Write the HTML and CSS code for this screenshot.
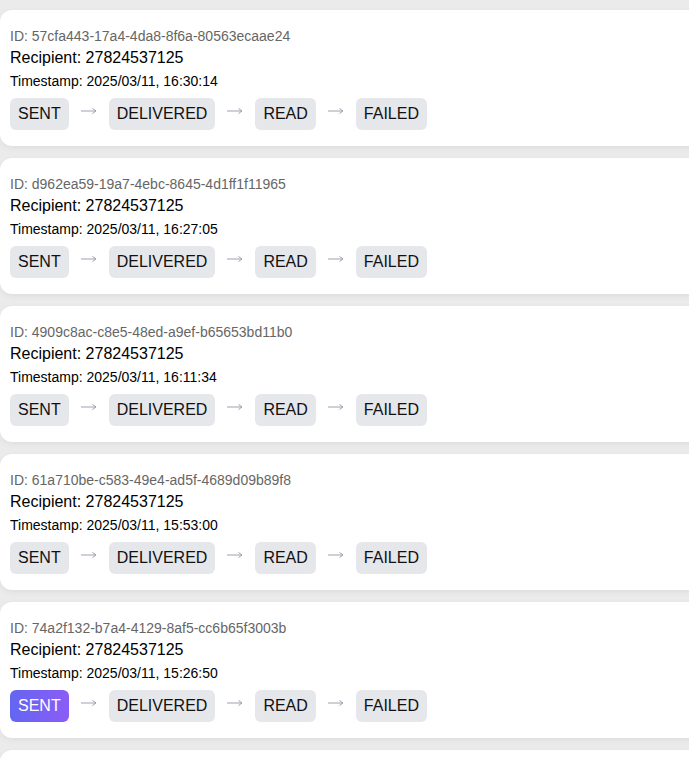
FILE: index.html
```html
<!DOCTYPE html>
<html lang="en">
<head>
<meta charset="utf-8">
<title>Messages</title>
<link rel="stylesheet" href="styles.css">
</head>
<body>
<div class="list">
  <div class="card">
    <div class="msg-id">ID: 57cfa443-17a4-4da8-8f6a-80563ecaae24</div>
    <div class="recipient">Recipient: 27824537125</div>
    <div class="stamp">Timestamp: 2025/03/11, 16:30:14</div>
    <div class="flow">
      <span class="badge">SENT</span><svg class="arrow" viewBox="0 0 16 8"><path d="M0 4H15M11.5 1.5L15 4L11.5 6.5"/></svg>
      <span class="badge">DELIVERED</span><svg class="arrow" viewBox="0 0 16 8"><path d="M0 4H15M11.5 1.5L15 4L11.5 6.5"/></svg>
      <span class="badge">READ</span><svg class="arrow" viewBox="0 0 16 8"><path d="M0 4H15M11.5 1.5L15 4L11.5 6.5"/></svg>
      <span class="badge">FAILED</span>
    </div>
  </div>
  <div class="card">
    <div class="msg-id">ID: d962ea59-19a7-4ebc-8645-4d1ff1f11965</div>
    <div class="recipient">Recipient: 27824537125</div>
    <div class="stamp">Timestamp: 2025/03/11, 16:27:05</div>
    <div class="flow">
      <span class="badge">SENT</span><svg class="arrow" viewBox="0 0 16 8"><path d="M0 4H15M11.5 1.5L15 4L11.5 6.5"/></svg>
      <span class="badge">DELIVERED</span><svg class="arrow" viewBox="0 0 16 8"><path d="M0 4H15M11.5 1.5L15 4L11.5 6.5"/></svg>
      <span class="badge">READ</span><svg class="arrow" viewBox="0 0 16 8"><path d="M0 4H15M11.5 1.5L15 4L11.5 6.5"/></svg>
      <span class="badge">FAILED</span>
    </div>
  </div>
  <div class="card">
    <div class="msg-id">ID: 4909c8ac-c8e5-48ed-a9ef-b65653bd11b0</div>
    <div class="recipient">Recipient: 27824537125</div>
    <div class="stamp">Timestamp: 2025/03/11, 16:11:34</div>
    <div class="flow">
      <span class="badge">SENT</span><svg class="arrow" viewBox="0 0 16 8"><path d="M0 4H15M11.5 1.5L15 4L11.5 6.5"/></svg>
      <span class="badge">DELIVERED</span><svg class="arrow" viewBox="0 0 16 8"><path d="M0 4H15M11.5 1.5L15 4L11.5 6.5"/></svg>
      <span class="badge">READ</span><svg class="arrow" viewBox="0 0 16 8"><path d="M0 4H15M11.5 1.5L15 4L11.5 6.5"/></svg>
      <span class="badge">FAILED</span>
    </div>
  </div>
  <div class="card">
    <div class="msg-id">ID: 61a710be-c583-49e4-ad5f-4689d09b89f8</div>
    <div class="recipient">Recipient: 27824537125</div>
    <div class="stamp">Timestamp: 2025/03/11, 15:53:00</div>
    <div class="flow">
      <span class="badge">SENT</span><svg class="arrow" viewBox="0 0 16 8"><path d="M0 4H15M11.5 1.5L15 4L11.5 6.5"/></svg>
      <span class="badge">DELIVERED</span><svg class="arrow" viewBox="0 0 16 8"><path d="M0 4H15M11.5 1.5L15 4L11.5 6.5"/></svg>
      <span class="badge">READ</span><svg class="arrow" viewBox="0 0 16 8"><path d="M0 4H15M11.5 1.5L15 4L11.5 6.5"/></svg>
      <span class="badge">FAILED</span>
    </div>
  </div>
  <div class="card">
    <div class="msg-id">ID: 74a2f132-b7a4-4129-8af5-cc6b65f3003b</div>
    <div class="recipient">Recipient: 27824537125</div>
    <div class="stamp">Timestamp: 2025/03/11, 15:26:50</div>
    <div class="flow">
      <span class="badge active">SENT</span><svg class="arrow" viewBox="0 0 16 8"><path d="M0 4H15M11.5 1.5L15 4L11.5 6.5"/></svg>
      <span class="badge">DELIVERED</span><svg class="arrow" viewBox="0 0 16 8"><path d="M0 4H15M11.5 1.5L15 4L11.5 6.5"/></svg>
      <span class="badge">READ</span><svg class="arrow" viewBox="0 0 16 8"><path d="M0 4H15M11.5 1.5L15 4L11.5 6.5"/></svg>
      <span class="badge">FAILED</span>
    </div>
  </div>
  <div class="card card-partial"></div>
</div>
</body>
</html>
```

FILE: styles.css
```css
html, body {
  margin: 0;
  padding: 0;
  background: #ebebeb;
  font-family: "Liberation Sans", Arial, sans-serif;
  color: #111;
  overflow: hidden;
}

.list {
  display: flex;
  flex-direction: column;
  gap: 12px;
  padding-top: 10px;
  width: 720px;
}

.card {
  background: #fff;
  border-radius: 12px;
  padding: 18px 10px 16px 10px;
  box-shadow: 0 2px 6px rgba(0, 0, 0, 0.06);
  display: flex;
  flex-direction: column;
}

.card-partial {
  min-height: 100px;
}

.msg-id {
  font-size: 14px;
  line-height: 16px;
  color: #666;
}

.recipient {
  font-size: 16px;
  line-height: 18px;
  margin-top: 5px;
  color: #000;
}

.stamp {
  font-size: 14px;
  line-height: 16px;
  margin-top: 6px;
  color: #000;
}

.flow {
  display: flex;
  align-items: center;
  gap: 12px;
  margin-top: 9px;
}

.badge {
  font-size: 16px;
  line-height: 18px;
  padding: 7px 8px;
  border-radius: 6px;
  background: #e5e7eb;
  color: #111;
}

.badge.active {
  background: linear-gradient(90deg, #6366f1, #8b5cf6);
  color: #fff;
}

.arrow {
  width: 16px;
  height: 8px;
  margin-top: -6px;
  fill: none;
  stroke: #9ca3af;
  stroke-width: 1;
}
```
